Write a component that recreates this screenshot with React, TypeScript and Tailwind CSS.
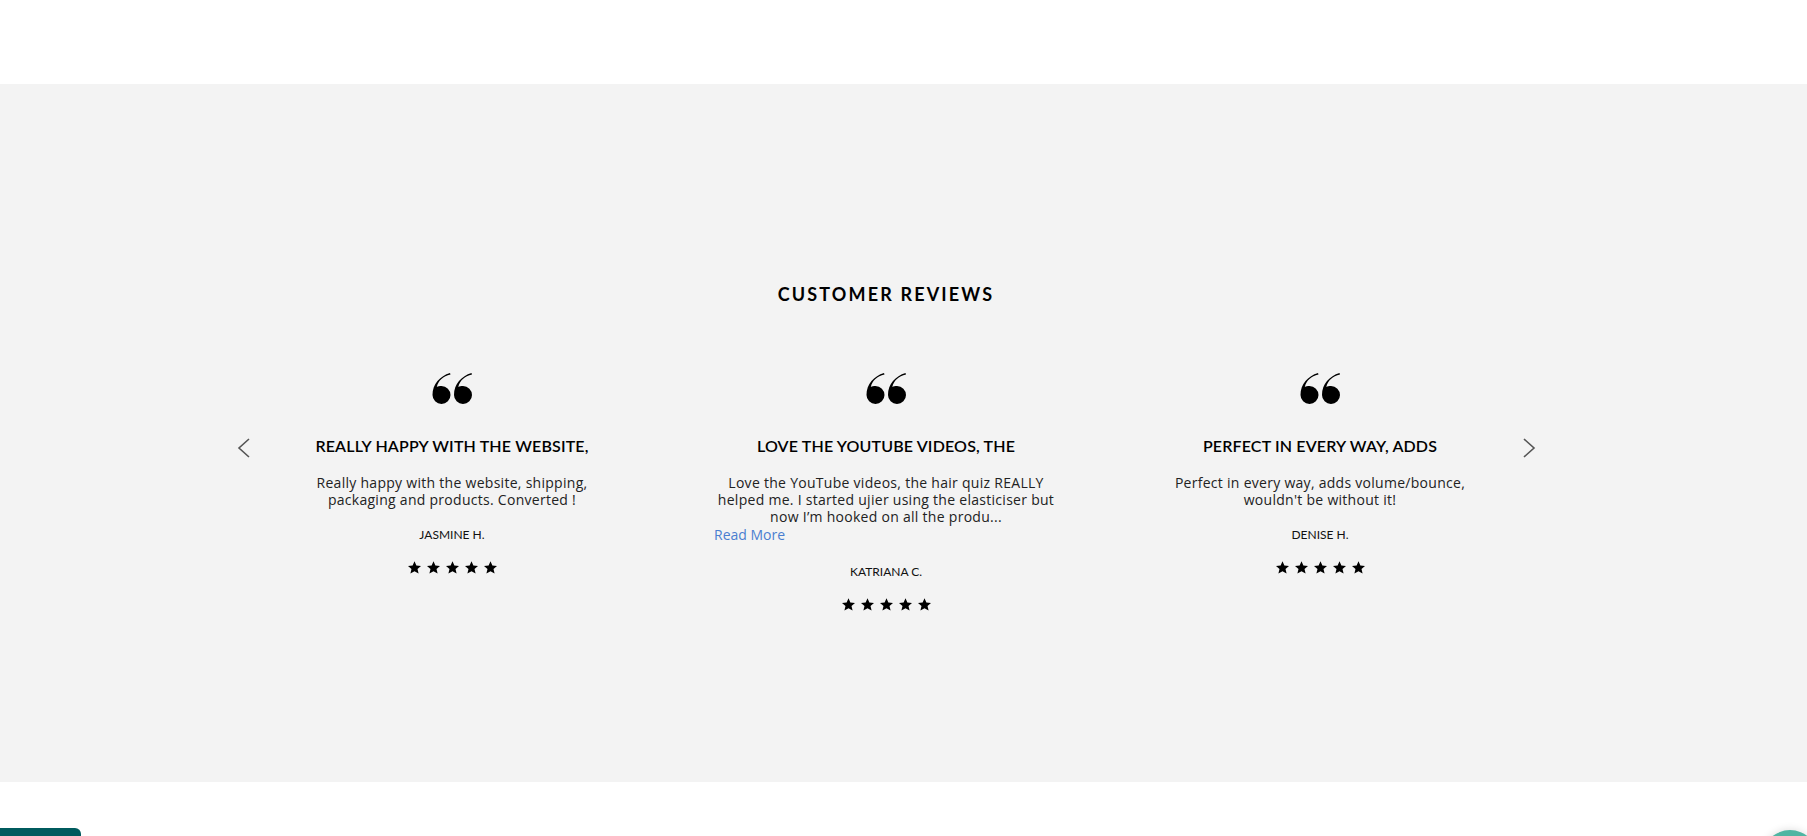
import React from "react";

const reviews = [
  {
    title: "REALLY HAPPY WITH THE WEBSITE,",
    body: ["Really happy with the website, shipping,", "packaging and products. Converted !"],
    name: "JASMINE H.",
    more: false,
  },
  {
    title: "LOVE THE YOUTUBE VIDEOS, THE",
    body: [
      "Love the YouTube videos, the hair quiz REALLY",
      "helped me. I started ujier using the elasticiser but",
      "now I\u2019m hooked on all the produ...",
    ],
    name: "KATRIANA C.",
    more: true,
  },
  {
    title: "PERFECT IN EVERY WAY, ADDS",
    body: ["Perfect in every way, adds volume/bounce,", "wouldn't be without it!"],
    name: "DENISE H.",
    more: false,
  },
];

function QuoteMark() {
  // two "6" shaped marks
  const mark = "M18 1 C8 4 0.5 12 0.5 23 A9 9 0 1 0 9.5 14 C7.5 14 6 14.4 4.8 15 C6.5 8.5 11 4.5 18.5 2.6 Z";
  return (
    <svg width="41" height="32" viewBox="0 0 41 32" className="block">
      <path d={mark} fill="#000" />
      <g transform="translate(21.5 0)">
        <path d={mark} fill="#000" />
      </g>
    </svg>
  );
}

function Star() {
  return (
    <svg width="13" height="13" viewBox="1.2 1.5 21.6 21" className="block">
      <path
        d="M12 1.5l3.1 7.2 7.8.7-5.9 5.1 1.8 7.6L12 18.1l-6.8 4 1.8-7.6-5.9-5.1 7.8-.7z"
        fill="#000"
      />
    </svg>
  );
}

function Stars() {
  return (
    <div className="flex items-center justify-center gap-[6px]">
      {[0, 1, 2, 3, 4].map((i) => (
        <Star key={i} />
      ))}
    </div>
  );
}

function Chevron({ dir }: { dir: "left" | "right" }) {
  return (
    <svg width="14" height="20" viewBox="0 0 14 20">
      <polyline
        points={dir === "left" ? "12,1 2,10 12,19" : "2,1 12,10 2,19"}
        fill="none"
        stroke="#555"
        strokeWidth="1.6"
      />
    </svg>
  );
}

function ReviewCard({ r }: { r: (typeof reviews)[number] }) {
  return (
    <div className="flex flex-col items-center px-[45px]">
      <QuoteMark />
      <h3 className="mt-[30px] text-[16px] leading-[24px] font-semibold text-black whitespace-nowrap tracking-[0.01em]">
        {r.title}
      </h3>
      <div className="mt-[16px] w-full text-center">
        <p
          className="text-[14px] leading-[17px] text-[#222] tracking-[0.02em] whitespace-nowrap"
          style={{ fontFamily: "'Open Sans', sans-serif" }}
        >
          {r.body.map((line, i) => (
            <span key={i} className="block">
              {line}
            </span>
          ))}
        </p>
        {r.more && (
          <a
            href="#"
            className="block text-left text-[14px] leading-[20px] text-[#4a7ed0]"
            style={{ fontFamily: "'Open Sans', sans-serif" }}
          >
            Read More
          </a>
        )}
      </div>
      <p className="mt-[18px] text-[12px] leading-[18px] text-[#111]">{r.name}</p>
      <div className="mt-[17px]">
        <Stars />
      </div>
    </div>
  );
}

export default function App() {
  return (
    <div
      className="relative w-full min-h-[836px] bg-white overflow-hidden"
      style={{ fontFamily: "Lato, 'Noto Sans', sans-serif" }}
    >
      <div className="h-[84px]" />

      {/* Customer reviews */}
      <section className="h-[698px] bg-[#f3f3f3]">
        <div className="w-[1772px] pt-[198px]">
          <h2 className="text-center text-[18px] leading-[24px] font-bold tracking-[0.12em] text-black">
            CUSTOMER REVIEWS
          </h2>
          <div className="relative mx-auto mt-[66px] w-[1302px]">
            <div className="grid grid-cols-3">
              {reviews.map((r, i) => (
                <ReviewCard key={i} r={r} />
              ))}
            </div>
            <button className="absolute left-[2px] top-[66px]">
              <Chevron dir="left" />
            </button>
            <button className="absolute right-[1px] top-[66px]">
              <Chevron dir="right" />
            </button>
          </div>
        </div>
      </section>

      {/* bottom widgets */}
      <div className="absolute left-0 top-[828px] h-[20px] w-[81px] rounded-tr-[6px] bg-[#005b5e]" />
      <div className="absolute left-[1762px] top-[830px] h-[56px] w-[56px] rounded-full bg-[#4fb5a2] shadow-[0_0_8px_rgba(0,0,0,0.15)]" />
    </div>
  );
}
